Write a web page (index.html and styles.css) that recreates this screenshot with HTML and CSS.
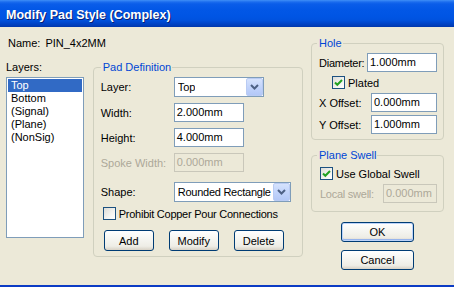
FILE: index.html
```html
<!DOCTYPE html>
<html>
<head>
<meta charset="utf-8">
<title>Modify Pad Style (Complex)</title>
<link rel="stylesheet" href="styles.css">
</head>
<body>
<div class="window">
  <div class="titlebar"><span class="title">Modify Pad Style (Complex)</span></div>
  <div class="client">
    <div class="main">
      <div class="name-row"><span>Name:</span><span>PIN_4x2MM</span></div>
      <div class="main-row">
        <div class="layers">
          <div class="lbl">Layers:</div>
          <ul class="listbox">
            <li class="sel">Top</li>
            <li>Bottom</li>
            <li>(Signal)</li>
            <li>(Plane)</li>
            <li>(NonSig)</li>
          </ul>
        </div>
        <fieldset class="group paddef">
          <legend>Pad Definition</legend>
          <div class="frow h20">
            <span class="flabel w73">Layer:</span>
            <div class="combo w90"><span class="cval">Top</span><span class="drop"><svg width="17" height="18" viewBox="0 0 17 18"><path d="M5 7 L8.5 10.5 L12 7" fill="none" stroke="#4D6185" stroke-width="2"/></svg></span></div>
          </div>
          <div class="frow h19 mt6">
            <span class="flabel w73">Width:</span>
            <div class="edit w70">2.000mm</div>
          </div>
          <div class="frow h19 mt6">
            <span class="flabel w73">Height:</span>
            <div class="edit w70">4.000mm</div>
          </div>
          <div class="frow h19 mt6 disabled">
            <span class="flabel w73">Spoke Width:</span>
            <div class="edit w70">0.000mm</div>
          </div>
          <div class="frow h20 mt10">
            <span class="flabel w73">Shape:</span>
            <div class="combo w117"><span class="cval tight">Rounded Rectangle</span><span class="drop"><svg width="17" height="18" viewBox="0 0 17 18"><path d="M5 7 L8.5 10.5 L12 7" fill="none" stroke="#4D6185" stroke-width="2"/></svg></span></div>
          </div>
          <div class="frow h13 mt5 cbrow pad-cb">
            <span class="check"></span>
            <span class="tight">Prohibit Copper Pour Connections</span>
          </div>
          <div class="btnrow mt10">
            <div class="btn small">Add</div>
            <div class="btn small">Modify</div>
            <div class="btn small">Delete</div>
          </div>
        </fieldset>
      </div>
    </div>
    <div class="side">
      <fieldset class="group hole">
        <legend>Hole</legend>
        <div class="frow h19">
          <span class="flabel w50 tight">Diameter:</span>
          <div class="edit w70">1.000mm</div>
        </div>
        <div class="frow h13 mt4 cbrow plated">
          <span class="check on"><svg width="11" height="11" viewBox="0 0 11 11"><path d="M2 5.5 L4.3 7.8 L9 3" fill="none" stroke="#21A121" stroke-width="2"/></svg></span>
          <span>Plated</span>
        </div>
        <div class="frow h19 mt4">
          <span class="flabel w54">X Offset:</span>
          <div class="edit w66">0.000mm</div>
        </div>
        <div class="frow h19 mt3">
          <span class="flabel w54">Y Offset:</span>
          <div class="edit w66">1.000mm</div>
        </div>
      </fieldset>
      <fieldset class="group swell">
        <legend>Plane Swell</legend>
        <div class="frow h13 cbrow swell-cb">
          <span class="check on"><svg width="11" height="11" viewBox="0 0 11 11"><path d="M2 5.5 L4.3 7.8 L9 3" fill="none" stroke="#21A121" stroke-width="2"/></svg></span>
          <span>Use Global Swell</span>
        </div>
        <div class="frow h19 mt4 disabled">
          <span class="flabel w66 tight">Local swell:</span>
          <div class="edit w54">0.000mm</div>
        </div>
      </fieldset>
      <div class="btn dlg default">OK</div>
      <div class="btn dlg cancel">Cancel</div>
    </div>
  </div>
</div>
</body>
</html>
```

FILE: styles.css
```css
html, body {
  margin: 0;
  padding: 0;
}
body {
  width: 454px;
  height: 287px;
  overflow: hidden;
  font-family: "Liberation Sans", Arial, sans-serif;
  font-size: 11px;
  line-height: 14px;
  color: #000;
  background: #ECE9D8;
}
.window {
  width: 454px;
  height: 287px;
  display: flex;
  flex-direction: column;
  background: #ECE9D8;
}
.titlebar {
  flex: none;
  height: 27px;
  box-sizing: border-box;
  padding: 3px 0 0 6px;
  display: flex;
  align-items: center;
  background: linear-gradient(to bottom, #3F8FF7 0px, #1B6CEE 2px, #0A5DE9 4px, #0257E6 10px, #0055E4 16px, #0052DE 20px, #0046CB 23px, #003BB5 26px, #0036AA 27px);
}
.title {
  color: #fff;
  font-weight: bold;
  font-size: 12.5px;
  text-shadow: 1px 1px 0 #0A1F72;
}
.client {
  flex: 1;
  display: flex;
  padding: 9px 0 0 6px;
  border-bottom: 2px solid #0B3BC4;
}
.main {
  display: flex;
  flex-direction: column;
  width: 297px;
}
.name-row {
  display: flex;
  gap: 5px;
  height: 14px;
  padding-left: 2px;
}
.main-row {
  display: flex;
  gap: 9px;
  margin-top: 10px;
}
.layers {
  width: 78px;
}
.lbl {
  height: 14px;
}
.listbox {
  list-style: none;
  margin: 3px 0 0;
  padding: 1px;
  box-sizing: border-box;
  height: 161px;
  border: 1px solid #7F9DB9;
  background: #fff;
}
.listbox li {
  height: 13px;
  line-height: 13px;
  padding-left: 3px;
}
.listbox li.sel {
  background: #316AC5;
  color: #fff;
}
.group {
  margin: 0;
  border: 1px solid #D0D0BF;
  border-radius: 4px;
  min-width: 0;
  box-sizing: border-box;
}
.group legend {
  color: #0046D5;
  padding: 0 1px 0 2px;
  line-height: 14px;
}
.paddef {
  width: 211px;
  padding: 3px 6px 5px 7px;
}
.side {
  display: flex;
  flex-direction: column;
  margin-left: 8px;
  width: 133px;
}
.hole {
  width: 133px;
  padding: 3px 6px 5px 5px;
}
.swell {
  width: 133px;
  margin-top: 8px;
  padding: 5px 6px 8px 5px;
}
.frow {
  display: flex;
  align-items: center;
}
.h20 { height: 20px; }
.h19 { height: 19px; }
.h13 { height: 13px; }
.mt3 { margin-top: 3px; }
.mt4 { margin-top: 4px; }
.mt5 { margin-top: 5px; }
.mt6 { margin-top: 6px; }
.mt10 { margin-top: 10px; }
.tight { letter-spacing: -0.25px; }
.flabel {
  flex: none;
  white-space: nowrap;
}
.hole .flabel, .swell .flabel {
  padding-left: 2px;
  box-sizing: border-box;
}
.swell .flabel { padding-left: 3px; }
.w50 { width: 50px; }
.w54 { width: 54px; }
.w66 { width: 66px; }
.w70 { width: 70px; }
.w73 { width: 73px; }
.w90 { width: 90px; }
.w117 { width: 117px; }
.edit {
  flex: none;
  height: 19px;
  box-sizing: border-box;
  border: 1px solid #7F9DB9;
  background: #fff;
  padding-left: 2px;
  line-height: 17px;
}
.edit.w54 { width: 54px; }
.edit.w66 { width: 66px; }
.edit.w70 { width: 70px; }
.disabled .flabel {
  color: #ACA899;
}
.disabled .edit {
  background: #ECE9D8;
  border-color: #C9C7BA;
  color: #ACA899;
}
.combo {
  flex: none;
  height: 20px;
  box-sizing: border-box;
  border: 1px solid #7F9DB9;
  background: #fff;
  display: flex;
  align-items: center;
  justify-content: space-between;
  padding: 0 0 0 3px;
}
.cval {
  white-space: nowrap;
  overflow: hidden;
}
.drop {
  flex: none;
  width: 17px;
  height: 18px;
  box-sizing: border-box;
  border: 1px solid #B9CBF3;
  border-radius: 2px;
  background: linear-gradient(to bottom, #D6E3FD 0%, #C2D4FB 50%, #B3C8F7 100%);
  display: flex;
  align-items: center;
  justify-content: center;
}
.drop svg {
  display: block;
  margin: -1px;
}
.cbrow {
  gap: 3px;
}
.pad-cb { margin-left: 2px; }
.plated { margin-left: 15px; gap: 3px; }
.swell-cb { margin-left: 3px; gap: 3px; }
.check {
  flex: none;
  width: 13px;
  height: 13px;
  box-sizing: border-box;
  border: 1px solid #1C5180;
  background: linear-gradient(135deg, #DCDCD7 0%, #F4F4F0 60%, #FFFFFF 100%);
  display: flex;
  align-items: center;
  justify-content: center;
}
.check svg { display: block; }
.btnrow {
  display: flex;
  gap: 15px;
  margin-left: 3px;
}
.btn {
  box-sizing: border-box;
  border: 1px solid #003C74;
  border-radius: 3px;
  background: linear-gradient(to bottom, #FFFFFF 0%, #F6F6F2 40%, #EEEDE6 80%, #D8D2C6 100%);
  display: flex;
  align-items: center;
  justify-content: center;
  text-align: center;
}
.btn.small {
  width: 50px;
  height: 21px;
}
.btn.dlg {
  width: 73px;
  height: 20px;
  align-self: center;
}
.btn.default {
  margin-top: 10px;
  box-shadow: inset 0 0 0 1px #BCD3F9, inset 0 -1px 0 1px #97B4EC;
}
.btn.cancel {
  margin-top: 8px;
}
```
